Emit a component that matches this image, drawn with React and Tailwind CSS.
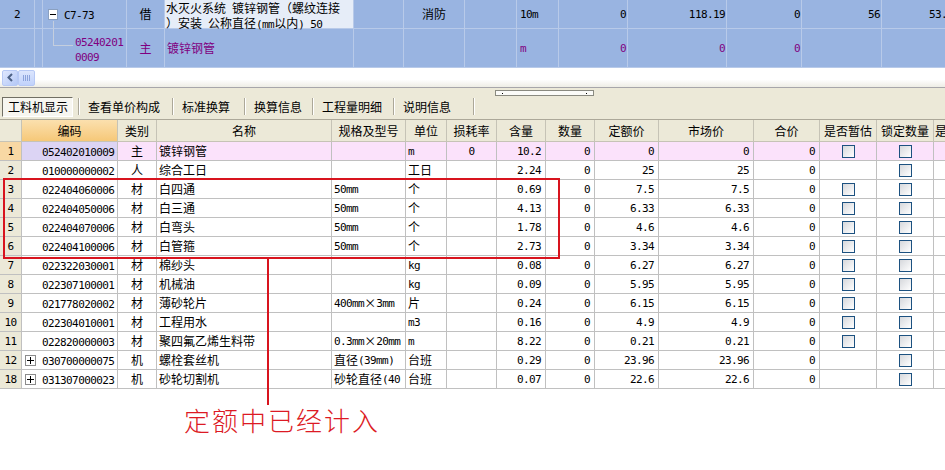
import React from "react";

const TOP = ["w-[35px]", "w-[8px]", "w-[84px]", "w-[38px]", "w-[189px]", "w-[50px]", "w-[61px]", "w-[52px]", "w-[42px]", "w-[69px]", "w-[99px]", "w-[75px]", "w-[80px]", "w-[80px]"];

const COLS = ["w-[22px]", "w-[96px]", "w-[39px]", "w-[175px]", "w-[74px]", "w-[41px]", "w-[50px]", "w-[49px]", "w-[49px]", "w-[64px]", "w-[95px]", "w-[66px]", "w-[57px]", "w-[57px]", "w-[30px]"];

const HEADERS = ["", "编码", "类别", "名称", "规格及型号", "单位", "损耗率", "含量", "数量", "定额价", "市场价", "合价", "是否暂估", "锁定数量", "是"];

// no, code, type, name, spec, unit, loss, qty, count, quota, market, total, est, lock, plus
const ROWS = [
  ["1", "052402010009", "主", "镀锌钢管", "", "m", "0", "10.2", "0", "0", "0", "0", true, true, false],
  ["2", "010000000002", "人", "综合工日", "", "工日", "", "2.24", "0", "25", "25", "0", false, true, false],
  ["3", "022404060006", "材", "白四通", "50mm", "个", "", "0.69", "0", "7.5", "7.5", "0", true, true, false],
  ["4", "022404050006", "材", "白三通", "50mm", "个", "", "4.13", "0", "6.33", "6.33", "0", true, true, false],
  ["5", "022404070006", "材", "白弯头", "50mm", "个", "", "1.78", "0", "4.6", "4.6", "0", true, true, false],
  ["6", "022404100006", "材", "白管箍", "50mm", "个", "", "2.73", "0", "3.34", "3.34", "0", true, true, false],
  ["7", "022322030001", "材", "棉纱头", "", "kg", "", "0.08", "0", "6.27", "6.27", "0", true, true, false],
  ["8", "022307100001", "材", "机械油", "", "kg", "", "0.09", "0", "5.95", "5.95", "0", true, true, false],
  ["9", "021778020002", "材", "薄砂轮片", "400mm×3mm", "片", "", "0.24", "0", "6.15", "6.15", "0", true, true, false],
  ["10", "022304010001", "材", "工程用水", "", "m3", "", "0.16", "0", "4.9", "4.9", "0", true, true, false],
  ["11", "022820000003", "材", "聚四氟乙烯生料带", "0.3mm×20mm", "m", "", "8.22", "0", "0.21", "0.21", "0", true, true, false],
  ["12", "030700000075", "机", "螺栓套丝机", "直径(39mm)", "台班", "", "0.29", "0", "23.96", "23.96", "0", false, true, true],
  ["18", "031307000023", "机", "砂轮切割机", "砂轮直径(40", "台班", "", "0.07", "0", "22.6", "22.6", "0", false, true, true],
];

// ascii runs go in a narrow mono face, the rest stays CJK
function Mixed({ text }) {
  const parts = text.split(/([\x20-\x7e]+)/).filter(Boolean);
  return parts.map((p, i) =>
    /^[\x20-\x7e]+$/.test(p) ? (
      <span key={i} className="font-['DejaVu_Sans_Mono',monospace] text-[11px] tracking-[-0.6px] whitespace-pre">
        {p}
      </span>
    ) : (
      <span key={i}>{p}</span>
    )
  );
}

const Check = () => (
  <span className="block w-[13px] h-[13px] border border-[#1c5180] bg-linear-to-br from-[#d6d8dc] to-white" />
);

const TopGrid = () => {
  const cell = "shrink-0 h-full border-r border-b border-[#b8cae9] flex items-center overflow-hidden whitespace-nowrap";
  return (
    <div className="bg-[#99b4e1]">
      <div className="flex h-[29px]">
        <div className={`${cell} ${TOP[0]} justify-center`}><Mixed text="2" /></div>
        <div className={`${cell} ${TOP[1]}`} />
        <div className={`${cell} ${TOP[2]} relative`}>
          <span className="ml-[5px] w-[10px] h-[11px] bg-white border border-[#8aa0c0] flex items-center justify-center">
            <span className="block w-[6px] h-px bg-black" />
          </span>
          <span className="ml-[6px]"><Mixed text="C7-73" /></span>
          <span className="absolute left-[10px] top-[21px] bottom-0 w-px bg-[#c4cede]" />
        </div>
        <div className={`${cell} ${TOP[3]} justify-center`}>借</div>
        <div className={`shrink-0 h-full border-r border-b border-[#b8cae9] ${TOP[4]} bg-[#e6edf8] px-px pt-[1px] text-[12px] leading-[13px] whitespace-nowrap`}>
          <div>水灭火系统<Mixed text=" " />镀锌钢管（螺纹连接</div>
          <div>）安装<Mixed text=" " />公称直径<Mixed text="(mm" />以内<Mixed text=") 50" /></div>
        </div>
        <div className={`${cell} ${TOP[5]}`} />
        <div className={`${cell} ${TOP[6]} justify-center`}>消防</div>
        <div className={`${cell} ${TOP[7]}`} />
        <div className={`${cell} ${TOP[8]} pl-[3px]`}><Mixed text="10m" /></div>
        <div className={`${cell} ${TOP[9]} justify-end pr-[1px]`}><Mixed text="0" /></div>
        <div className={`${cell} ${TOP[10]} justify-end pr-[1px]`}><Mixed text="118.19" /></div>
        <div className={`${cell} ${TOP[11]} justify-end pr-[1px]`}><Mixed text="0" /></div>
        <div className={`${cell} ${TOP[12]} justify-end pr-[1px]`}><Mixed text="56" /></div>
        <div className={`${cell} ${TOP[13]} justify-end pr-[2px]`}><Mixed text="53.17" /></div>
      </div>
      <div className="flex h-[39px] text-[#800080]">
        <div className={`${cell} ${TOP[0]}`} />
        <div className={`${cell} ${TOP[1]}`} />
        <div className={`${cell} ${TOP[2]} items-start`}>
          <span className="ml-[10px] w-[20px] h-[17px] border-l border-b border-[#c4cede]" />
          <span className="ml-[2px] self-center leading-[13px] pt-[2px]">
            <Mixed text="05240201" />
            <br />
            <Mixed text="0009" />
          </span>
        </div>
        <div className={`${cell} ${TOP[3]} justify-center`}>主</div>
        <div className={`${cell} ${TOP[4]} pl-[2px]`}>镀锌钢管</div>
        <div className={`${cell} ${TOP[5]}`} />
        <div className={`${cell} ${TOP[6]}`} />
        <div className={`${cell} ${TOP[7]}`} />
        <div className={`${cell} ${TOP[8]} pl-[3px]`}><Mixed text="m" /></div>
        <div className={`${cell} ${TOP[9]} justify-end pr-[1px]`}><Mixed text="0" /></div>
        <div className={`${cell} ${TOP[10]} justify-end pr-[1px]`}><Mixed text="0" /></div>
        <div className={`${cell} ${TOP[11]} justify-end pr-[1px]`}><Mixed text="0" /></div>
        <div className={`${cell} ${TOP[12]}`} />
        <div className={`${cell} ${TOP[13]}`} />
      </div>
    </div>
  );
};

const ScrollBar = () => (
  <div className="h-[20px] flex items-center bg-linear-to-b from-white from-60% to-[#eeede5] border-b border-[#a7a6aa]">
    <div className="ml-[2px] w-[16px] h-[16px] rounded-[2px] border border-[#b7c9f5] bg-linear-to-br from-[#e0e8fe] to-[#b4c8f6] flex items-center justify-center">
      <svg width="8" height="9" viewBox="0 0 8 9">
        <path d="M6 1 L2.5 4.5 L6 8" fill="none" stroke="#4d6185" strokeWidth="2" />
      </svg>
    </div>
    <div className="w-[17px] h-[16px] rounded-[2px] border border-[#b7c9f5] bg-linear-to-b from-[#dce6fd] to-[#c1d2fb] flex items-center justify-center gap-px">
      <span className="block w-px h-[6px] bg-[#8ca3db]" />
      <span className="block w-px h-[6px] bg-[#8ca3db]" />
      <span className="block w-px h-[6px] bg-[#8ca3db]" />
      <span className="block w-px h-[6px] bg-[#8ca3db]" />
    </div>
  </div>
);

const TABS = [
  ["查看单价构成", "w-[94px]"],
  ["标准换算", "w-[72px]"],
  ["换算信息", "w-[68px]"],
  ["工程量明细", "w-[81px]"],
  ["说明信息", "w-[80px]"],
];

const TabBar = () => (
  <div className="h-[32px] bg-[#ece9d8] border-b border-[#aca899]">
    <div className="h-[8px] flex">
      <span className="ml-[495px] mt-[2px] w-[99px] h-[6px] border border-[#8a8a80] bg-[#fbfbf8] flex items-center justify-between px-[6px]">
        <span className="block w-px h-px bg-black" />
        <span className="block w-px h-px bg-black" />
      </span>
    </div>
    <div className="flex h-[21px] items-center">
      <div className="w-[78px] h-full flex items-center">
        <div className="ml-[2px] w-[71px] h-[20px] border border-t-[#716f64] border-l-[#716f64] border-r-white border-b-white bg-[#f7f6f0] flex items-center pl-[5px]">
          工料机显示
        </div>
      </div>
      {TABS.map(([t, w]) => (
        <div key={t} className={`${w} h-full flex items-center`}>
          <span className="w-px h-[17px] bg-[#aca899]" />
          <span className="w-px h-[17px] bg-white" />
          <span className="pl-[8px]">{t}</span>
        </div>
      ))}
      <span className="w-px h-[17px] bg-[#aca899]" />
      <span className="w-px h-[17px] bg-white" />
    </div>
  </div>
);

const BottomGrid = () => {
  const base = "shrink-0 h-full border-r border-b border-[#c0c0c0] flex items-center overflow-hidden whitespace-nowrap";
  return (
    <div>
      <div className="flex h-[22px] bg-[#ece9d8]">
        {HEADERS.map((h, i) => (
          <div
            key={i}
            className={`${base} ${COLS[i]} ${i === 14 ? "justify-start pl-px" : "justify-center"} ${
              i === 1 ? "bg-linear-to-b from-[#fbe0ae] to-[#f6c878]" : ""
            } border-[#c6c3b6]`}
          >
            {h}
          </div>
        ))}
      </div>
      {ROWS.map((r, ri) => {
        const first = ri === 0;
        return (
          <div key={ri} className={`flex h-[19px] ${first ? "bg-[#fbe2fb]" : "bg-white"}`}>
            <div className={`${base} ${COLS[0]} justify-center ${first ? "bg-[#f8d8a4]" : "bg-[#ece9d8]"}`}>
              <Mixed text={r[0]} />
            </div>
            <div className={`${base} ${COLS[1]} ${first ? "bg-[#dcd4f4]" : ""}`}>
              {r[14] ? (
                <span className="ml-[3px] w-[11px] h-[11px] border border-[#8c8c8c] bg-white flex items-center justify-center relative">
                  <span className="absolute w-[7px] h-px bg-black" />
                  <span className="absolute w-px h-[7px] bg-black" />
                </span>
              ) : (
                <span className="ml-[3px] w-[11px]" />
              )}
              <span className="ml-[6px]"><Mixed text={r[1]} /></span>
            </div>
            <div className={`${base} ${COLS[2]} justify-center`}>{r[2]}</div>
            <div className={`${base} ${COLS[3]} pl-[2px]`}>{r[3]}</div>
            <div className={`${base} ${COLS[4]} pl-[2px]`}><Mixed text={r[4]} /></div>
            <div className={`${base} ${COLS[5]} pl-[2px]`}><Mixed text={r[5]} /></div>
            <div className={`${base} ${COLS[6]} justify-center`}><Mixed text={r[6]} /></div>
            {[7, 8, 9, 10, 11].map((k) => (
              <div key={k} className={`${base} ${COLS[k]} justify-end pr-[4px]`}>
                <Mixed text={r[k]} />
              </div>
            ))}
            <div className={`${base} ${COLS[12]} justify-center`}>{r[12] && <Check />}</div>
            <div className={`${base} ${COLS[13]} justify-center`}>{r[13] && <Check />}</div>
            <div className={`${base} ${COLS[14]}`} />
          </div>
        );
      })}
    </div>
  );
};

export default function App() {
  return (
    <div className="relative w-[945px] h-[470px] overflow-hidden bg-white text-black text-[12px] leading-none font-['Noto_Sans_CJK_SC','Noto_Sans_CJK_JP',sans-serif]">
      <div className="w-[980px]">
        <TopGrid />
        <ScrollBar />
        <TabBar />
        <BottomGrid />
      </div>

      {/* red annotation */}
      <div className="absolute left-[3px] top-[178px] w-[557px] h-[81px] border-2 border-[#d8141e]" />
      <div className="absolute left-[267px] top-[259px] w-[2px] h-[146px] bg-[#d8141e]" />
      <div className="absolute left-[184px] top-[407px] text-[26px] leading-none tracking-[2px] font-light text-[#dc1a24]">
        定额中已经计入
      </div>
    </div>
  );
}
